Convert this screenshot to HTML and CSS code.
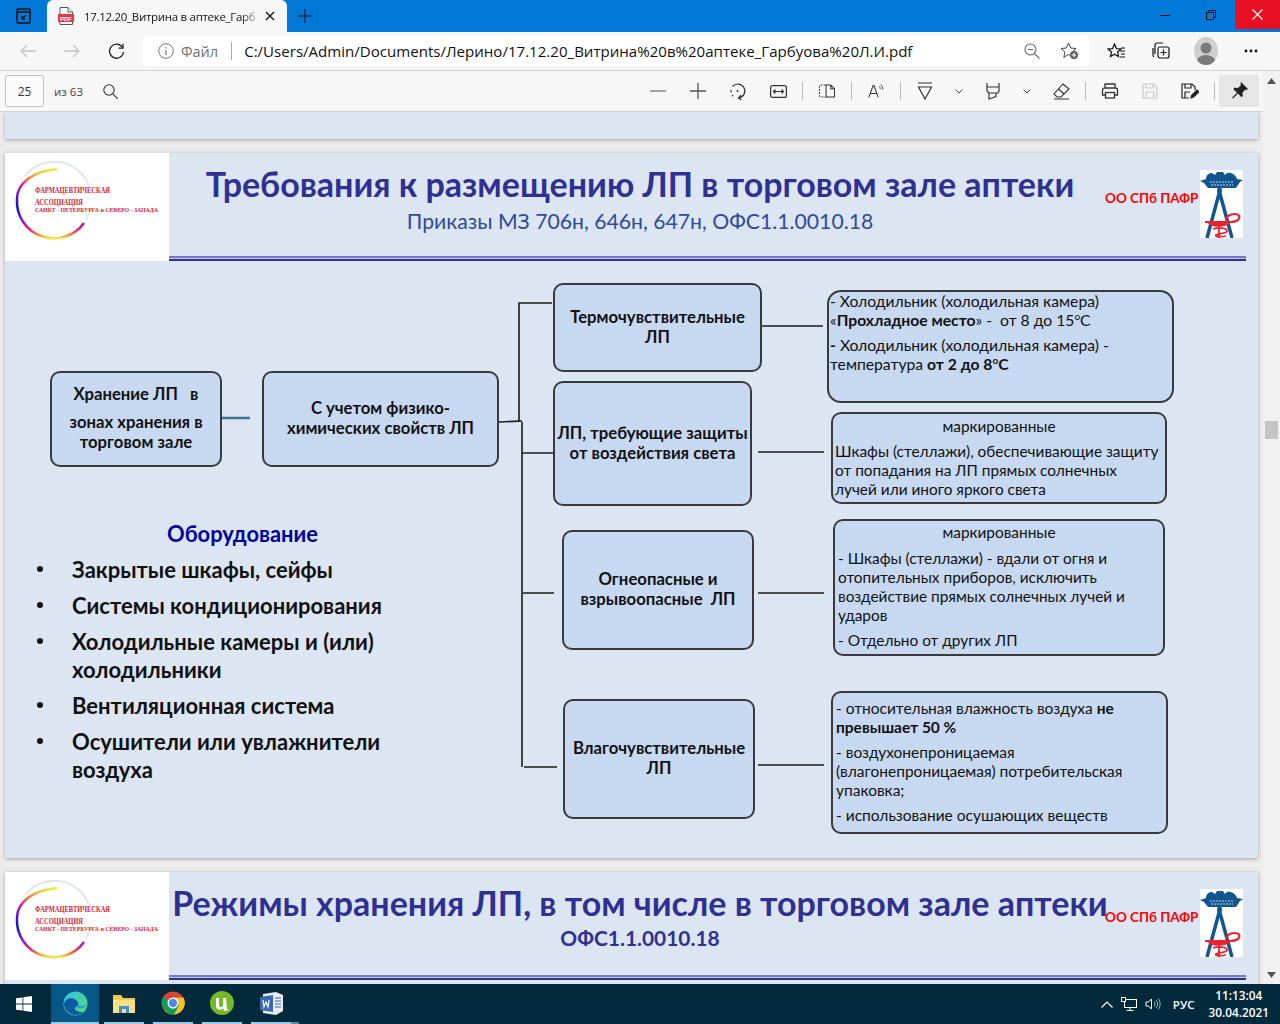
FILE: index.html
```html
<!DOCTYPE html>
<html lang="ru">
<head>
<meta charset="utf-8">
<title>17.12.20_Витрина в аптеке_Гарбуова Л.И.pdf</title>
<link rel="stylesheet" href="styles.css">
</head>
<body>
<div class="screen">
  <svg class="defs" width="0" height="0">
    <defs>
      <linearGradient id="ring" x1="0" y1="0" x2="0" y2="1"><stop offset="0" stop-color="#f4ec4e"/><stop offset=".12" stop-color="#f08a30"/><stop offset=".24" stop-color="#e0149a"/><stop offset=".4" stop-color="#5a10d8"/><stop offset=".55" stop-color="#0a10e0"/><stop offset=".72" stop-color="#7020c8"/><stop offset=".86" stop-color="#e01880"/><stop offset=".94" stop-color="#f08030"/><stop offset="1" stop-color="#f4ec4e"/></linearGradient>
      <symbol id="ring-art" viewBox="0 0 164 108">
        <path d="M20 23A37 37 0 0 1 84 33" fill="none" stroke="#dfe7e3" stroke-width="2"/>
        <path d="M84 60A37 37 0 0 1 81 67" fill="none" stroke="#e4eadf" stroke-width="2"/>
        <path d="M52 16C28 18 12 30 12 46A37 37 0 0 0 79 70" fill="none" stroke="url(#ring)" stroke-width="2.500"/>
      </symbol>
      <symbol id="tower-art" viewBox="0 0 43 68">
        <rect width="43" height="68" fill="#fff"/>
        <path d="M6 9C6 5 9 3 12 3l3 2 2-3h6l2 3 2-2c4-1 9 2 10 6l6 1-3 2-4 6H8l-4-5-4-2z" fill="#12568f"/>
        <path d="M10 12h24M11 15h22" stroke="#bcd3e6" stroke-width="1" stroke-dasharray="2 1"/>
        <path d="M17.500 17h4v3h-4z" fill="#12568f"/>
        <circle cx="19.500" cy="21" r="2.500" fill="#12568f"/>
        <path d="M19.500 22L7 68M19.500 22L32 68" stroke="#12568f" stroke-width="3.500" fill="none"/>
        <path d="M5 52H30C41 52 42 44 35 44 29 44 26 47 26 50" fill="none" stroke="#ea2330" stroke-width="2.200"/>
        <path d="M8 53C10 58 26 58 30 53z" fill="#ea2330"/>
        <path d="M19 52V68M13 59c6-2 14-1 14 2s-9 2-11 4 6 2 10 1" fill="none" stroke="#ea2330" stroke-width="1.800"/>
      </symbol>
    </defs>
  </svg>

  <header class="titlebar">
    <div class="tabs-btn">
      <svg width="18" height="18" viewBox="0 0 18 18" fill="none" stroke="#111" stroke-width="1.600"><rect x="2" y="2" width="13" height="14" rx="1"/><path d="M2 5h13"/><path d="M11 8l-4 4M7 9v3h3" stroke-width="1.300"/></svg>
    </div>
    <div class="tab">
      <svg class="pdf-icon" width="16" height="18" viewBox="0 0 16 18"><path d="M2 .5h8l4.500 4.500V17.500H2z" fill="#fff" stroke="#555"/><path d="M10 .5v4.500h4.500" fill="#eee" stroke="#555"/><rect x="0" y="7" width="16" height="8" fill="#e8383d"/><text x="8" y="13.500" class="pdf-label">PDF</text></svg>
      <span class="tab-title">17.12.20_Витрина в аптеке_Гарб</span>
      <svg class="tab-close" width="10" height="10" viewBox="0 0 10 10" stroke="#111" stroke-width="1.300"><path d="M1 1l8 8M9 1l-8 8"/></svg>
    </div>
    <svg class="new-tab" width="14" height="14" viewBox="0 0 14 14" stroke="#111" stroke-width="1.100"><path d="M7 0v14M0 7h14"/></svg>
    <div class="win-controls">
      <div class="win-btn"><svg width="10" height="10" viewBox="0 0 10 10" stroke="#111"><path d="M0 5.500h10"/></svg></div>
      <div class="win-btn"><svg width="10" height="10" viewBox="0 0 10 10" fill="none" stroke="#111"><path d="M2.500 2.500V.5h7v7h-2"/><rect x=".5" y="2.500" width="7" height="7"/></svg></div>
      <div class="win-btn win-close"><svg width="11" height="11" viewBox="0 0 11 11" stroke="#fff" stroke-width="1.100"><path d="M.5.500l10 10M10.500.500l-10 10"/></svg></div>
    </div>
  </header>

  <nav class="navbar">
    <div class="nav-btn"><svg width="16" height="14" viewBox="0 0 16 14" fill="none" stroke="#c4c4c4" stroke-width="1.300"><path d="M16 7H1M7 1L1 7l6 6"/></svg></div>
    <div class="nav-btn"><svg width="16" height="14" viewBox="0 0 16 14" fill="none" stroke="#c4c4c4" stroke-width="1.300"><path d="M0 7h15M9 1l6 6-6 6"/></svg></div>
    <div class="nav-btn"><svg width="17" height="17" viewBox="0 0 17 17" fill="none" stroke="#222" stroke-width="1.300"><path d="M14.500 4.500A7 7 0 1 0 15.500 9"/><path d="M15 .8v4.400h-4.400"/></svg></div>
    <div class="urlbar">
      <svg class="info-icon" width="16" height="16" viewBox="0 0 16 16" fill="none" stroke="#777"><circle cx="8" cy="8" r="7.300"/><path d="M8 7v5M8 4v1.500" stroke-width="1.200"/></svg>
      <span class="url-file">Файл</span>
      <span class="url-sep"></span>
      <span class="url-text">C:/Users/Admin/Documents/Лерино/17.12.20_Витрина%20в%20аптеке_Гарбуова%20Л.И.pdf</span>
      <svg class="url-zoom" width="16" height="16" viewBox="0 0 16 16" fill="none" stroke="#666" stroke-width="1.100"><circle cx="6.500" cy="6.500" r="5.500"/><path d="M10.500 10.500l5 5M4 6.500h5"/></svg>
      <svg class="url-fav" width="19" height="18" viewBox="0 0 19 18" fill="none" stroke="#444"><path d="M8.500 1l2.200 5 5.300.5-4 3.600 1.200 5.200-4.700-2.800-4.700 2.800 1.200-5.200-4-3.600 5.300-.5z"/><circle cx="14" cy="13" r="4.200" fill="#666" stroke="none"/><path d="M14 10.800v4.400M11.800 13h4.400" stroke="#fff"/></svg>
    </div>
    <div class="nav-tools">
      <div class="tool-btn"><svg width="18" height="17" viewBox="0 0 18 17" fill="none" stroke="#111" stroke-width="1.200"><path d="M7.500 1l2 4.600 4.500.4-3.400 3 1 4.600-4.100-2.400-4 2.400 1-4.600L1 6l4.600-.4z"/><path d="M13 8h5M14 11h4M13 14h5M14 5h4"/></svg></div>
      <div class="tool-btn"><svg width="18" height="18" viewBox="0 0 18 18" fill="none" stroke="#111" stroke-width="1.200"><path d="M3 12V3a2 2 0 0 1 2-2h6"/><path d="M1 6v7a3 3 0 0 0 1 2"/><rect x="6" y="5" width="11" height="11" rx="2"/><path d="M11.500 7.500v6M8.500 10.500h6"/></svg></div>
      <div class="avatar"><svg width="24" height="28" viewBox="0 0 24 28"><rect width="24" height="28" fill="#cfcfcf"/><circle cx="12" cy="11" r="5.500" fill="#7a7a7a"/><ellipse cx="12" cy="24" rx="9" ry="6" fill="#7a7a7a"/></svg></div>
      <div class="tool-btn"><svg width="14" height="4" viewBox="0 0 14 4" fill="#111"><circle cx="2" cy="2" r="1.400"/><circle cx="7" cy="2" r="1.400"/><circle cx="12" cy="2" r="1.400"/></svg></div>
    </div>
  </nav>

  <div class="workspace">
    <div class="doc-column">
      <div class="pdf-toolbar">
        <div class="page-box">25</div>
        <span class="page-count">из 63</span>
        <svg class="pdf-search" width="15" height="15" viewBox="0 0 15 15" fill="none" stroke="#333" stroke-width="1.100"><circle cx="6" cy="6" r="5.200"/><path d="M9.800 9.800l5 5"/></svg>
        <div class="pdf-tools">
          <div class="pt"><svg width="16" height="16" viewBox="0 0 16 16" stroke="#777" stroke-width="1.300"><path d="M0 8h16"/></svg></div>
          <div class="pt"><svg width="16" height="16" viewBox="0 0 16 16" stroke="#555" stroke-width="1.300"><path d="M0 8h16M8 0v16"/></svg></div>
          <div class="pt"><svg width="18" height="18" viewBox="0 0 18 18" fill="none" stroke="#333" stroke-width="1.200"><path d="M3.500 4.500A7 7 0 1 1 9.500 16"/><path d="M12 13l-2.500 3 3 2"/><circle cx="8.500" cy="9" r="1" fill="#333" stroke="none"/><path d="M2 8v2.500M3 13l1 1.400"/></svg></div>
          <div class="pt"><svg width="17" height="13" viewBox="0 0 17 13" fill="none" stroke="#333" stroke-width="1.200"><rect x=".6" y=".6" width="15.800" height="11.800" rx="2"/><path d="M4 6.500h9" stroke-width="1"/><path d="M5.500 4.500l-2 2 2 2M11.500 4.500l2 2-2 2"/></svg></div>
          <span class="pt-sep"></span>
          <div class="pt"><svg width="16" height="14" viewBox="0 0 17 14" fill="none" stroke="#333" stroke-width="1.100"><path d="M7 .6H2a1.500 1.500 0 0 0-1.500 1.500v10A1.500 1.500 0 0 0 2 13.400h5" stroke-dasharray="2 1.300"/><path d="M7.500.6h5l4 4v8.800h-9zM12.500.6v4h4"/></svg></div>
          <span class="pt-sep"></span>
          <div class="pt"><svg width="17" height="16" viewBox="0 0 20 17" fill="none" stroke="#333" stroke-width="1.200"><path d="M1 16L6 2h1l5 14M3 11.500h7"/><path d="M13 3a4 4 0 0 1 1.500 3.500M15 1a7 7 0 0 1 2.500 6" stroke-width="1"/></svg></div>
          <span class="pt-sep"></span>
          <div class="pt"><svg width="16" height="18" viewBox="0 0 16 18" fill="none" stroke="#333" stroke-width="1.200"><path d="M1 1h14M1.500 5h13L8 17z"/></svg></div>
          <div class="pt-chev"><svg width="8" height="5" viewBox="0 0 8 5" fill="none" stroke="#444"><path d="M.5.500L4 4l3.500-3.500"/></svg></div>
          <div class="pt"><svg width="16" height="18" viewBox="0 0 16 18" fill="none" stroke="#333" stroke-width="1.200"><path d="M2 1v4h12V1M2 5v4l2 2h9l1-2V5M4 11v6l7-2.500V11"/></svg></div>
          <div class="pt-chev"><svg width="8" height="5" viewBox="0 0 8 5" fill="none" stroke="#444"><path d="M.5.500L4 4l3.500-3.500"/></svg></div>
          <div class="pt"><svg width="18" height="17" viewBox="0 0 18 17" fill="none" stroke="#333" stroke-width="1.100"><path d="M11 1l6 5-8 8H5l-3-3zM6 5.500l6 5.500M2 16h15"/></svg></div>
          <span class="pt-sep"></span>
          <div class="pt"><svg width="18" height="16" viewBox="0 0 18 16" fill="none" stroke="#333" stroke-width="1.300"><path d="M4 5V1h10v4M4 12H1.500V7a2 2 0 0 1 2-2h11a2 2 0 0 1 2 2v5H14"/><rect x="4.500" y="9.500" width="9" height="5.500"/></svg></div>
          <div class="pt"><svg width="16" height="16" viewBox="0 0 16 16" fill="none" stroke="#c8c8c8" stroke-width="1.200"><path d="M1 1h11l3 3v11H1zM4 1v4h7V1M4 15V9h8v6"/></svg></div>
          <div class="pt"><svg width="18" height="17" viewBox="0 0 18 17" fill="none" stroke="#222" stroke-width="1.200"><path d="M8 15H1V1h10l3 3v3M4 1v4h6V1M4 15V9h5"/><path d="M10 15l.5-2.500 5.500-5.500 1.800 1.800-5.500 5.500z" fill="#222"/></svg></div>
          <span class="pt-sep"></span>
          <div class="pt pt-pin"><svg width="18" height="18" viewBox="0 0 18 18" fill="#222"><path d="M11 0l7 7-1.500 1-1-.5-3 3 .3 3.500-1.300 1.300-3.500-3.800-5 5-1-.8 5-5L3.200 7l1.300-1.300 3.500.3 3-3-.5-1z"/></svg></div>
        </div>
      </div>

      <main class="viewer">
        <div class="slide slide-prev"></div>

        <section class="slide slide-main">
          <div class="slide-head">
            <svg class="assoc-logo" width="164" height="108" viewBox="0 0 164 108">
              <use href="#ring-art" width="164" height="108"/>
              <text x="30" y="40" class="logo-text" textLength="75" lengthAdjust="spacingAndGlyphs">ФАРМАЦЕВТИЧЕСКАЯ</text>
              <text x="30" y="52" class="logo-text" textLength="48" lengthAdjust="spacingAndGlyphs">АССОЦИАЦИЯ</text>
              <text x="30" y="59" class="logo-text logo-text-sm" textLength="123" lengthAdjust="spacingAndGlyphs">САНКТ - ПЕТЕРБУРГА и СЕВЕРО - ЗАПАДА</text>
            </svg>
            <div class="head-main">
              <div class="head-row">
                <div class="head-titles">
                  <h1 class="slide-title">Требования к размещению ЛП в торговом зале аптеки</h1>
                  <p class="slide-sub">Приказы МЗ 706н, 646н, 647н, ОФС1.1.0010.18</p>
                </div>
                <div class="brand">
                  <span class="brand-text">ОО СПб ПАФР</span>
                  <svg class="tower" width="43" height="68" viewBox="0 0 43 68"><use href="#tower-art" width="43" height="68"/></svg>
                </div>
              </div>
              <div class="head-rule"></div>
            </div>
          </div>

          <div class="canvas">
            <svg class="links" width="1253" height="597" viewBox="0 0 1253 597" fill="none" stroke="#1c1c1c" stroke-width="1.600">
              <path d="M217 157h28" stroke="#3f6f96" stroke-width="2.500"/>
              <path d="M494 161l23-1M514 161V42h33M517 161v345M517 192h31M518 332h31M519 506h33"/>
              <path d="M753 65h65M753 191h66M753 332h66M753 504h66"/>
            </svg>

            <div class="node node-main n-a"><p>Хранение ЛП &nbsp;&nbsp;в</p><p class="a-lines">зонах хранения в<br>торговом зале</p></div>
            <div class="node node-main n-b">С учетом физико-<br>химических свойств ЛП</div>
            <div class="node node-main n-c1">Термочувствительные<br>ЛП</div>
            <div class="node node-main n-c2">ЛП, требующие защиты<br>от воздействия света</div>
            <div class="node node-main n-c3">Огнеопасные и<br>взрывоопасные &nbsp;ЛП</div>
            <div class="node node-main n-c4">Влагочувствительные<br>ЛП</div>

            <div class="node node-text n-d1">
              <p>- Холодильник (холодильная камера)<br>«<b>Прохладное место</b>» - &nbsp;от 8 до 15<sup>о</sup>С</p>
              <p><b>-</b> Холодильник (холодильная камера) -<br>температура <b>от 2 до 8<sup>о</sup>С</b></p>
            </div>
            <div class="node node-text n-d2">
              <p class="center">маркированные</p>
              <p>Шкафы (стеллажи), обеспечивающие защиту<br>от попадания на ЛП прямых солнечных<br>лучей или иного яркого света</p>
            </div>
            <div class="node node-text n-d3">
              <p class="center">маркированные</p>
              <p>- Шкафы (стеллажи) - вдали от огня и<br>отопительных приборов, исключить<br>воздействие прямых солнечных лучей и<br>ударов</p>
              <p>- Отдельно от других ЛП</p>
            </div>
            <div class="node node-text n-d4">
              <p>- относительная влажность воздуха <b>не<br>превышает 50 %</b></p>
              <p>- воздухонепроницаемая<br>(влагонепроницаемая) потребительская<br>упаковка;</p>
              <p>- использование осушающих веществ</p>
            </div>

            <div class="equip">
              <h2 class="equip-title">Оборудование</h2>
              <ul class="equip-list">
                <li>Закрытые шкафы, сейфы</li>
                <li>Системы кондиционирования</li>
                <li>Холодильные камеры и (или)<br>холодильники</li>
                <li>Вентиляционная система</li>
                <li>Осушители или увлажнители<br>воздуха</li>
              </ul>
            </div>
          </div>
        </section>

        <section class="slide slide-next">
          <div class="slide-head">
            <svg class="assoc-logo" width="164" height="108" viewBox="0 0 164 108">
              <use href="#ring-art" width="164" height="108"/>
              <text x="30" y="40" class="logo-text" textLength="75" lengthAdjust="spacingAndGlyphs">ФАРМАЦЕВТИЧЕСКАЯ</text>
              <text x="30" y="52" class="logo-text" textLength="48" lengthAdjust="spacingAndGlyphs">АССОЦИАЦИЯ</text>
              <text x="30" y="59" class="logo-text logo-text-sm" textLength="123" lengthAdjust="spacingAndGlyphs">САНКТ - ПЕТЕРБУРГА и СЕВЕРО - ЗАПАДА</text>
            </svg>
            <div class="head-main">
              <div class="head-row">
                <div class="head-titles">
                  <h1 class="slide-title">Режимы хранения ЛП, в том числе в торговом зале аптеки</h1>
                  <p class="slide-sub slide-sub-bold">ОФС1.1.0010.18</p>
                </div>
                <div class="brand">
                  <span class="brand-text">ОО СПб ПАФР</span>
                  <svg class="tower" width="43" height="68" viewBox="0 0 43 68"><use href="#tower-art" width="43" height="68"/></svg>
                </div>
              </div>
              <div class="head-rule"></div>
            </div>
          </div>
        </section>
      </main>
    </div>

    <aside class="scrollbar">
      <svg class="sb-arrow" width="9" height="6" viewBox="0 0 9 6" fill="#555"><path d="M4.500 0L9 6H0z"/></svg>
      <div class="sb-thumb"></div>
      <svg class="sb-arrow sb-down" width="9" height="6" viewBox="0 0 9 6" fill="#555"><path d="M4.500 6L0 0h9z"/></svg>
    </aside>
  </div>

  <footer class="taskbar">
    <div class="start"><svg width="16" height="16" viewBox="0 0 16 16" fill="#fff"><path d="M0 2.300l6.500-.9v6.200H0zM7.300 1.300L16 0v7.600H7.300zM0 8.400h6.500v6.200L0 13.700zM7.300 8.400H16V16l-8.700-1.200z"/></svg></div>
    <div class="tb-app tb-active"><svg width="25" height="25" viewBox="0 0 25 25"><defs><linearGradient id="edgeA" x1="0" y1="0" x2="1" y2="1"><stop offset="0" stop-color="#2fc3e8"/><stop offset="1" stop-color="#5ed96c"/></linearGradient></defs><circle cx="12.500" cy="12.500" r="12" fill="url(#edgeA)"/><path d="M1 13C2 7 9 6 13 9c3 2 3 6 0 7-3 1 0 5 5 5 1 0 2 0 3-.5C17 25 9 25 5 21c-3-3-4-5-4-8z" fill="#0c59a4"/><path d="M14 14c4 2 8 1 10-2-1 4-5 6-8 5-2 0-3-2-2-3z" fill="#1a9fd8"/></svg></div>
    <div class="tb-app"><svg width="24" height="21" viewBox="0 0 24 21"><path d="M1 2h8l2 3h12v15H1z" fill="#f5c94c"/><path d="M1 7h22v13H1z" fill="#fbe08a"/><path d="M7 20v-7h10v7h-3v-4h-4v4z" fill="#3a92d8"/></svg></div>
    <div class="tb-app"><svg width="24" height="24" viewBox="0 0 24 24"><circle cx="12" cy="12" r="11.500" fill="#db4437"/><path d="M12 12L3 18A11.500 11.500 0 0 1 2 6z" fill="#0f9d58"/><path d="M12 12h11.400A11.500 11.500 0 0 1 3 19z" fill="#f4b400"/><path d="M12 23.500A11.500 11.500 0 0 1 3 18l9-6h11.400A11.500 11.500 0 0 1 12 23.500z" fill="#0f9d58"/><path d="M12 6.500h10.500A11.500 11.500 0 0 1 13 23.400l5-9z" fill="#fbc02d"/><circle cx="12" cy="12" r="5.500" fill="#fff"/><circle cx="12" cy="12" r="4.200" fill="#4f86ec"/></svg></div>
    <div class="tb-app"><svg width="24" height="24" viewBox="0 0 24 24"><circle cx="12" cy="12" r="12" fill="#76b82a"/><path d="M6 7v8c0 4 5 5 7 2l1 3 5-1-2-1-1-11h-3v8c-1 2-4 2-4-1V7z" fill="#fff"/></svg></div>
    <div class="tb-app"><svg width="23" height="23" viewBox="0 0 23 23"><path d="M3 2l13-2 7 3v16l-7 4-13-2z" fill="#e8edf6"/><path d="M0 5l13-2v17L0 18z" fill="#3c67b1"/><path d="M3 8l1 7 2-5 2 5 1-7" fill="none" stroke="#fff" stroke-width="1.200"/><path d="M15 6h6M15 9h6M15 12h6M15 15h6" stroke="#3c67b1"/></svg></div>
    <div class="tb-sliver"></div>
    <div class="tray">
      <svg width="12" height="7" viewBox="0 0 12 7" fill="none" stroke="#fff" stroke-width="1.200"><path d="M.5 6.500L6 1l5.500 5.500"/></svg>
      <svg width="16" height="14" viewBox="0 0 16 14" fill="none" stroke="#fff"><rect x="3.500" y="2.500" width="12" height="8"/><path d="M9 10.500v3M5.500 13.500h7"/><rect x=".5" y=".5" width="4" height="4" fill="#03293d"/></svg>
      <svg width="16" height="14" viewBox="0 0 16 14" fill="none" stroke="#fff"><path d="M1 5v4h2.500l3 3V2l-3 3z"/><path d="M9 4.500a3.500 3.500 0 0 1 0 5M11 3a6 6 0 0 1 0 8M13 1.500a8 8 0 0 1 0 11" stroke="#9fb4bf"/></svg>
      <span class="lang">РУС</span>
      <div class="clock"><span>11:13:04</span><span>30.04.2021</span></div>
    </div>
  </footer>
</div>
</body>
</html>
```

FILE: styles.css
```css
* { box-sizing: border-box; }
html, body { margin: 0; padding: 0; height: 100%; overflow: hidden; }
body { font-family: "Open Sans", "Noto Sans", sans-serif; color: #111; }
p, h1, h2, ul { margin: 0; padding: 0; font-weight: inherit; font-size: inherit; }

.defs { position: absolute; }
.screen { width: 1280px; height: 1024px; display: flex; flex-direction: column; overflow: hidden; background: #f7f7f7; }

/* title bar */
.titlebar { height: 32px; flex: none; background: #0078d7; display: flex; align-items: flex-start; }
.tabs-btn { width: 47px; height: 32px; display: flex; align-items: center; justify-content: center; }
.tab { width: 240px; height: 32px; background: #f7f7f7; border-radius: 6px 6px 0 0; display: flex; align-items: center; padding: 0 8px 0 11px; }
.pdf-icon { flex: none; }
.pdf-label { font: bold 6px "Liberation Sans", sans-serif; fill: #fff; text-anchor: middle; }
.tab-title { font-size: 11.500px; margin-left: 10px; width: 178px; flex: none; white-space: nowrap; -webkit-mask-image: linear-gradient(90deg, #000 88%, transparent); mask-image: linear-gradient(90deg, #000 88%, transparent); letter-spacing: -.3px; }
.tab-close { margin-left: 3px; flex: none; }
.new-tab { margin: 9px 0 0 11px; }
.win-controls { margin-left: auto; display: flex; }
.win-btn { width: 46px; height: 29px; display: flex; align-items: center; justify-content: center; padding-right: 2px; }
.win-close { background: #e81123; width: 45px; padding-right: 0; }

/* navigation */
.navbar { height: 39px; flex: none; background: #f7f7f7; border-bottom: 1px solid #d2d2d2; display: flex; align-items: center; padding: 0 0 0 6px; }
.nav-btn { width: 44px; height: 30px; display: flex; align-items: center; justify-content: center; }
.urlbar { margin-left: 5px; width: 946px; height: 30px; background: #fff; border-radius: 4px; display: flex; align-items: center; padding: 0 10px 0 15px; }
.url-file { margin-left: 7px; color: #6f6f6f; font-size: 14.500px; }
.url-sep { width: 1px; height: 18px; background: #aaa; margin: 0 12px 0 13px; }
.url-text { white-space: nowrap; font-size: 15.070px; color: #111; }
.url-zoom { margin-left: auto; }
.url-fav { margin-left: 20px; }
.nav-tools { display: flex; align-items: center; margin-left: 4px; }
.tool-btn { width: 45px; height: 30px; display: flex; align-items: center; justify-content: center; }
.avatar { width: 45px; display: flex; justify-content: center; }
.avatar svg { border-radius: 50%; }

/* workspace */
.workspace { flex: 1; min-height: 0; display: flex; }
.doc-column { flex: 1; min-width: 0; display: flex; flex-direction: column; }
.pdf-toolbar { height: 41px; flex: none; background: #f7f7f7; border-bottom: 1px solid #d2d2d2; display: flex; align-items: center; padding: 0 4px 0 5px; }
.page-box { width: 39px; height: 32px; border: 1px solid #c4c4c4; border-radius: 2px; background: #fbfbfb; font-size: 12px; display: flex; align-items: center; justify-content: center; color: #333; }
.page-count { font-size: 11.500px; color: #444; margin-left: 10px; }
.pdf-search { margin-left: 20px; }
.pdf-tools { margin-left: auto; display: flex; align-items: center; }
.pt { width: 40px; height: 32px; display: flex; align-items: center; justify-content: center; }
.pt-chev { width: 28px; height: 32px; display: flex; align-items: center; justify-content: center; }
.pt-sep { width: 1px; height: 18px; background: #bbb; margin: 0 4px; }
.pt-pin { background: #e5e5e5; border-radius: 2px; }

/* pdf view */
.viewer { flex: 1; min-height: 0; overflow: hidden; background: #ececec; display: flex; flex-direction: column; gap: 14px; padding-left: 5px; padding-right: 5px; }
.slide { flex: none; width: 1253px; background: #dce6f2; box-shadow: 0 1px 4px rgba(0,0,0,.3); font-family: "Lato", "Open Sans", sans-serif; }
.slide-prev { height: 27px; }
.slide-main { height: 705px; }
.slide-next { height: 120px; }

.slide-head { display: flex; height: 108px; }
.assoc-logo { flex: none; background: #fff; display: block; }
.logo-text { font: bold 8px "Liberation Serif", serif; fill: #d6242c; }
.logo-text-sm { font-size: 6.400px; }
.head-main { flex: 1; min-width: 0; display: flex; flex-direction: column; padding-right: 12px; }
.head-row { flex: 1; display: flex; }
.head-titles { flex: none; width: 936px; padding-left: 6px; padding-top: 12px; display: flex; flex-direction: column; align-items: center; color: #2e3192; white-space: nowrap; }
.slide-title { font-size: 34px; line-height: 38px; font-weight: 700; }
.slide-sub { font-size: 21.200px; line-height: 28px; margin-top: 4px; color: #2e4a9e; }
.slide-sub-bold { font-weight: 700; font-size: 20.900px; color: #2e3192; margin-top: 2px; }
.brand { flex: none; display: flex; align-items: flex-start; padding-top: 17px; color: #f00; font-weight: 700; font-size: 13.500px; white-space: nowrap; }
.brand-text { margin-top: 20px; }
.tower { margin-left: 2px; display: block; }
.head-rule { height: 5px; flex: none; border-top: 2px solid #7679bb; border-bottom: 2px solid #2e3192; background: #c7cbe6; }

.canvas { position: relative; height: 597px; }
.links { position: absolute; left: 0; top: 0; }
.node { position: absolute; background: #c6d9f1; border: 2px solid #3a3a3a; border-radius: 10px; color: #111; }
.node-main { display: flex; flex-direction: column; align-items: center; justify-content: center; text-align: center; font-weight: 700; font-size: 16.700px; line-height: 20px; padding-bottom: 2px; }
.node-text { font-size: 15.400px; line-height: 19px; }
.node-text p + p { margin-top: 6px; }
.node-text sup { font-size: 10px; line-height: 0; }
.center { text-align: center; }
.a-lines { margin-top: 8px; }

.n-a { left: 45px; top: 110px; width: 172px; height: 96px; }
.n-b { left: 257px; top: 110px; width: 237px; height: 96px; }
.n-c1 { left: 548px; top: 22px; width: 209px; height: 89px; }
.n-c2 { left: 548px; top: 120px; width: 199px; height: 125px; }
.n-c3 { left: 557px; top: 269px; width: 192px; height: 120px; }
.n-c4 { left: 558px; top: 438px; width: 192px; height: 120px; }
.n-d1 { left: 822px; top: 29px; width: 347px; height: 113px; padding: 0 0 0 1px; border-radius: 14px; font-size: 15.700px; }
.n-d2 { left: 826px; top: 151px; width: 336px; height: 92px; padding: 3px 2px; }
.n-d3 { left: 828px; top: 258px; width: 332px; height: 137px; padding: 2px 3px; }
.n-d3 p + p { margin-top: 6.500px; }
.n-d4 { left: 826px; top: 430px; width: 337px; height: 143px; padding: 6px 3px; font-size: 15.500px; }

.equip { position: absolute; left: 0; top: 258px; width: 480px; }
.equip-title { font-size: 21.900px; line-height: 30px; font-weight: 700; color: #00009c; text-align: center; padding-right: 5px; }
.equip-list { list-style: none; margin-top: 7px; font-size: 22px; line-height: 28px; font-weight: 700; color: #111; }
.equip-list li { position: relative; padding-left: 67px; margin-bottom: 8px; }
.equip-list li::before { content: ""; position: absolute; left: 32px; top: 10px; width: 6px; height: 6px; border-radius: 50%; background: #111; }

/* scrollbar */
.scrollbar { width: 17px; flex: none; background: #f1f1f1; position: relative; display: flex; flex-direction: column; align-items: center; padding-top: 7px; }
.sb-thumb { position: absolute; top: 350px; left: 2px; width: 13px; height: 18px; background: #c4c4c4; }
.sb-down { margin-top: auto; margin-bottom: 6px; }

/* taskbar */
.taskbar { height: 40px; flex: none; background: #03293d; display: flex; align-items: stretch; color: #fff; position: relative; }
.start { width: 48px; display: flex; align-items: center; justify-content: center; margin-right: 3px; }
.tb-app { width: 40px; margin-right: 9px; display: flex; align-items: center; justify-content: center; border-bottom: 2px solid #9ccbe8; }
.tb-active { width: 48px; margin-right: 5px; background: #045786; }
.tb-sliver { width: 8px; margin-left: -9px; border-bottom: 2px solid #5b8ba6; }
.tray { margin-left: auto; display: flex; align-items: center; padding-right: 11px; gap: 8px; }
.lang { font-size: 11.500px; font-weight: 600; margin-left: 4px; }
.clock { margin-left: 6px; display: flex; flex-direction: column; align-items: center; font-size: 11.800px; font-weight: 600; line-height: 17px; }
```
